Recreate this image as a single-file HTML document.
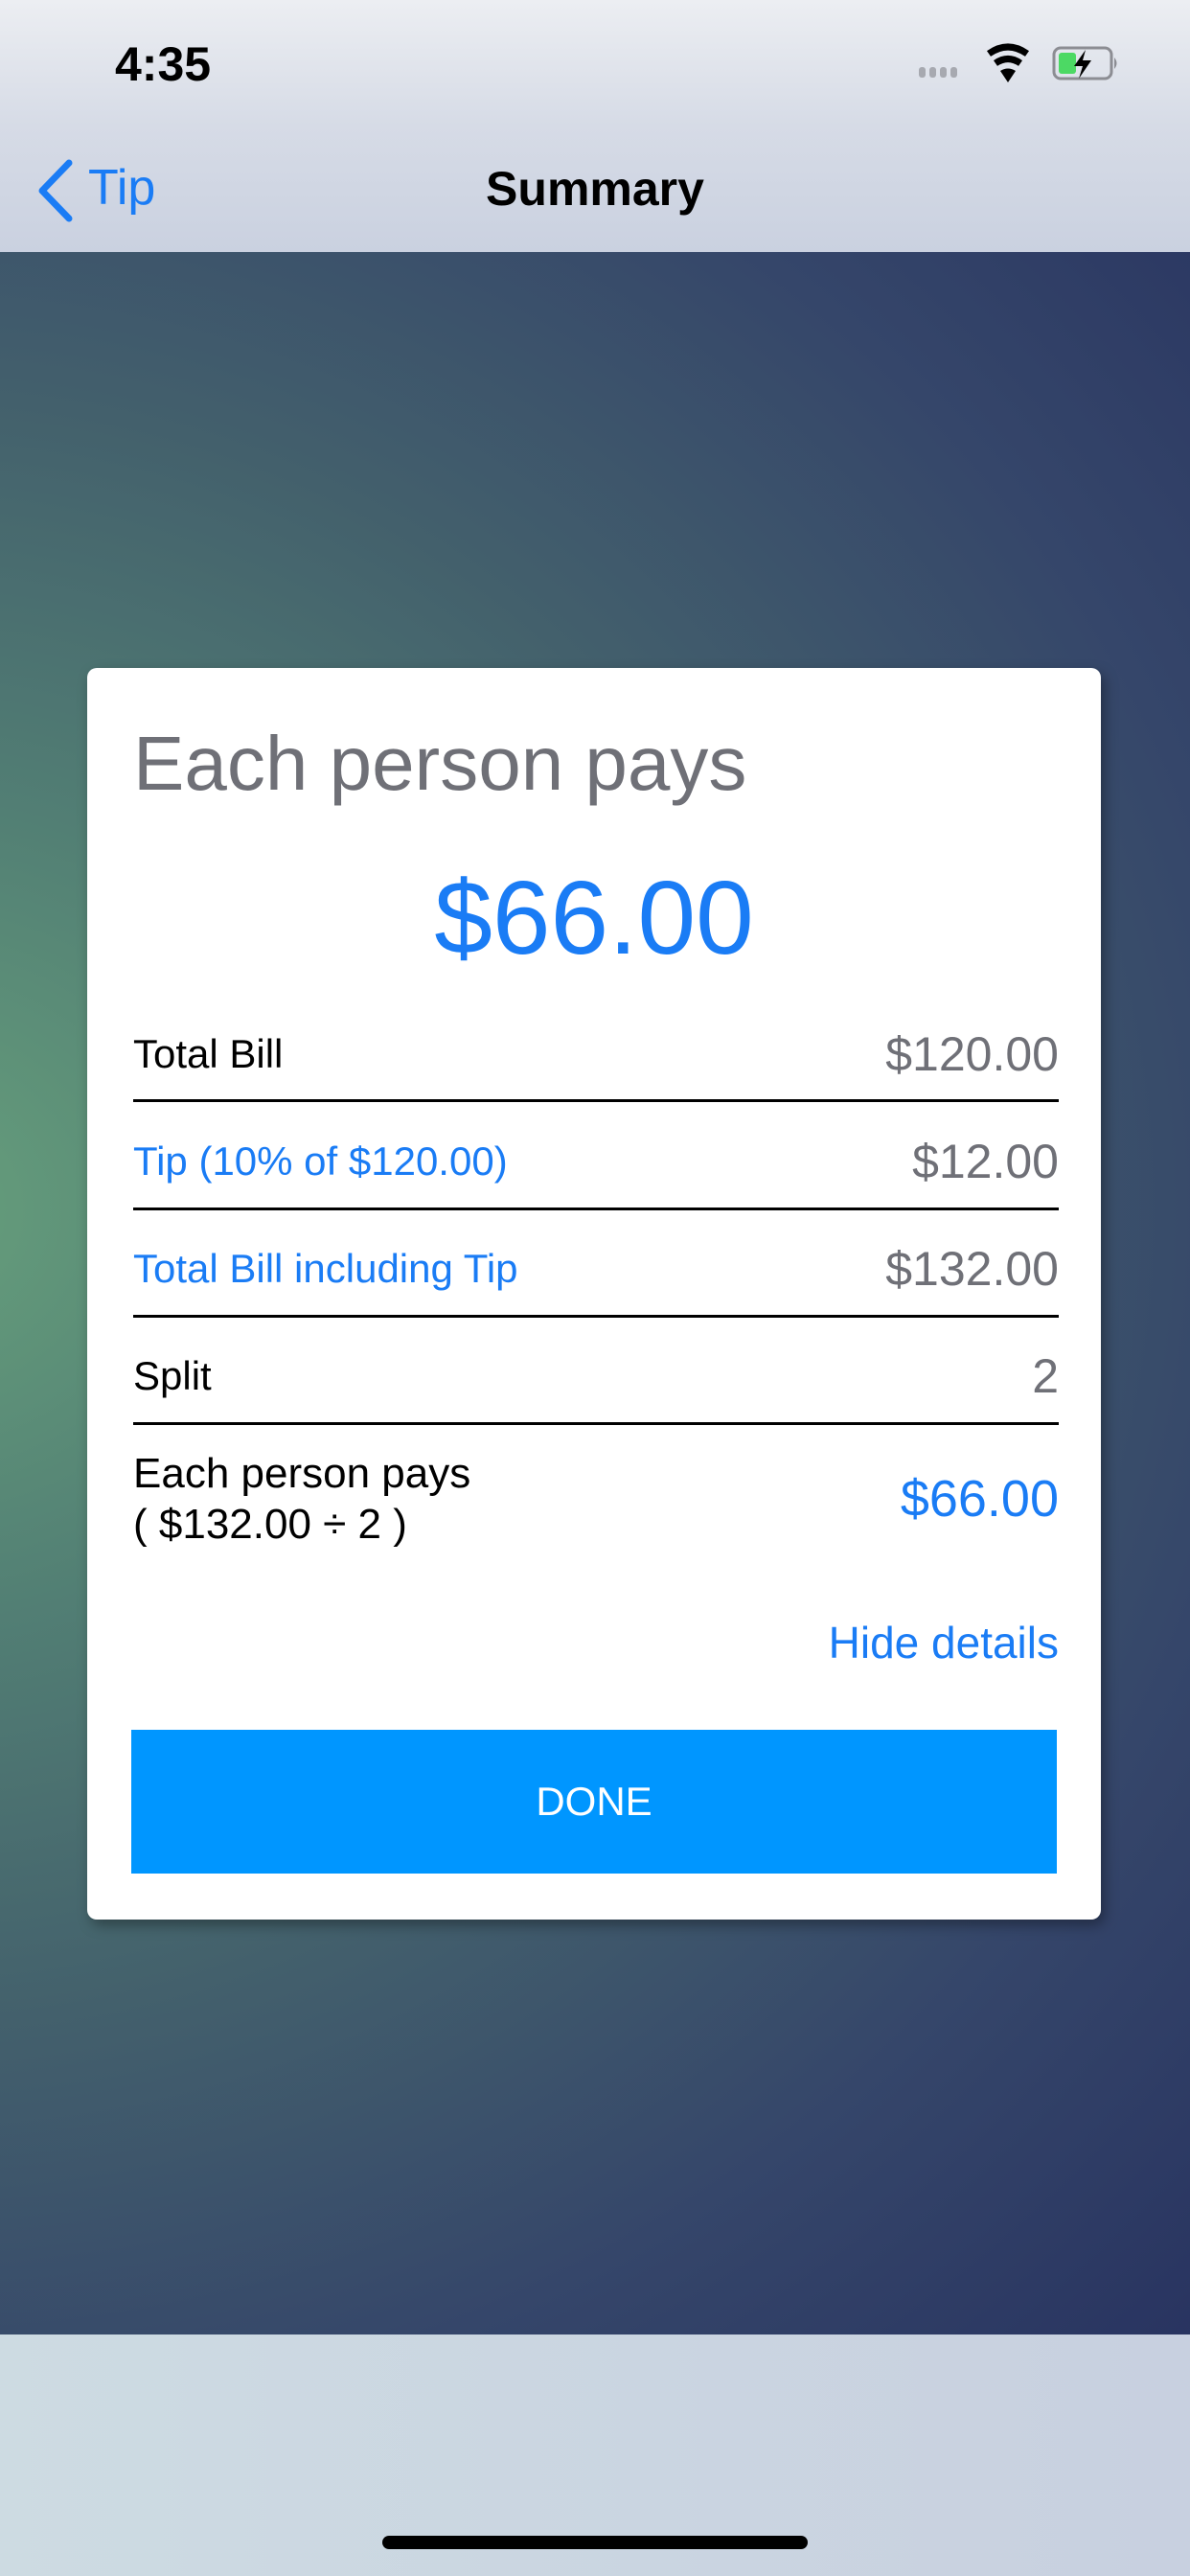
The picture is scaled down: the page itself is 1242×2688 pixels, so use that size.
<!DOCTYPE html>
<html><head><meta charset="utf-8"><style>
*{margin:0;padding:0;box-sizing:border-box}
body{width:1242px;height:2688px;overflow:hidden;font-family:"Liberation Sans",sans-serif;position:relative;background:#cbd5e0}
.top{position:absolute;left:0;top:0;width:1242px;height:263px;background:linear-gradient(180deg,#eceef2 0%,#d6dbe6 50%,#cad1e0 100%)}
.bg{position:absolute;left:0;top:263px;width:1242px;height:2173px;background:radial-gradient(ellipse 1900px 1700px at -100px 1000px,#67a07c 0%,#527f74 25%,#43606c 50%,#35466a 75%,#283360 100%)}
.bottom{position:absolute;left:0;top:2436px;width:1242px;height:252px;background:linear-gradient(90deg,#cddbe2,#c8d0e0)}
.home{position:absolute;left:399px;top:2646px;width:444px;height:14px;border-radius:7px;background:#000}
.time{position:absolute;left:120px;top:38px;font-size:50px;font-weight:bold;color:#000}
.title{position:absolute;left:0;width:1242px;top:168px;text-align:center;font-size:50px;font-weight:bold;color:#000}
.back{position:absolute;left:92px;top:166px;font-size:52px;color:#1a7cf5}
.card{position:absolute;left:91px;top:697px;width:1058px;height:1306px;background:#fff;border-radius:10px;box-shadow:4px 6px 14px rgba(0,0,0,.35)}
.h{position:absolute;left:48px;top:54px;font-size:80px;color:#6f7077}
.big{position:absolute;left:0;width:100%;top:198px;text-align:center;font-size:109px;color:#1a7cf5}
.row{position:absolute;left:48px;width:966px;font-size:42px;display:flex;justify-content:space-between;align-items:center}
.row span+span{font-size:50px}
.line{position:absolute;left:48px;width:966px;height:3px;background:#000}
.g{color:#6f7077}.b{color:#1a7cf5}.k{color:#000}
.btn{position:absolute;left:46px;top:1108px;width:966px;height:150px;background:#0096ff;color:#fff;font-size:42px;display:flex;align-items:center;justify-content:center}
</style></head><body>
<div class="top"></div>
<div class="time">4:35</div>
<svg style="position:absolute;left:955px;top:44px" width="230" height="45" viewBox="0 0 230 45">
<g fill="#a7a9b0"><rect x="4" y="26" width="7" height="11" rx="3"/><rect x="15" y="26" width="7" height="11" rx="3"/><rect x="26" y="26" width="7" height="11" rx="3"/><rect x="37" y="26" width="7" height="11" rx="3"/></g>
<path d="M77 12 Q97 -2 117 12" stroke="#000" stroke-width="7" fill="none"/><path d="M84 22 Q97 13 110 22" stroke="#000" stroke-width="7" fill="none"/><path d="M89 30 L97 42 L105 30 Q97 25 89 30Z" fill="#000"/>
<rect x="145" y="6" width="60" height="32" rx="7" fill="none" stroke="#8c8d93" stroke-width="3"/><rect x="150" y="11" width="18" height="22" rx="3" fill="#4cd964"/><path d="M208 16 Q213 22 208 28Z" fill="#8c8d93"/><path d="M178 8 L166 25 L175 25 L171 38 L184 19 L175 19Z" fill="#000"/>
</svg>
<svg style="position:absolute;left:36px;top:166px" width="44" height="66" viewBox="0 0 44 66"><path d="M36 4 L8 33 L36 62" stroke="#1a7cf5" stroke-width="7" fill="none" stroke-linecap="round" stroke-linejoin="round"/></svg>
<div class="back">Tip</div>
<div class="title">Summary</div>
<div class="bg"></div>
<div class="bottom"></div>
<div class="home"></div>
<div class="card">
<div class="h">Each person pays</div>
<div class="big">$66.00</div>
<div class="row" style="top:374px"><span class="k">Total Bill</span><span class="g">$120.00</span></div>
<div class="line" style="top:450px"></div>
<div class="row" style="top:486px"><span class="b">Tip (10% of $120.00)</span><span class="g">$12.00</span></div>
<div class="line" style="top:563px"></div>
<div class="row" style="top:598px"><span class="b">Total Bill including Tip</span><span class="g">$132.00</span></div>
<div class="line" style="top:675px"></div>
<div class="row" style="top:710px"><span class="k">Split</span><span class="g">2</span></div>
<div class="line" style="top:787px"></div>
<div class="row" style="top:814px"><span class="k" style="line-height:53px;font-size:44px">Each person pays<br>( $132.00 ÷ 2 )</span><span class="b" style="font-size:54px">$66.00</span></div>
<div class="row" style="top:990px;justify-content:flex-end"><span class="b" style="font-size:46px">Hide details</span></div>
<div class="btn">DONE</div>
</div>
</body></html>
